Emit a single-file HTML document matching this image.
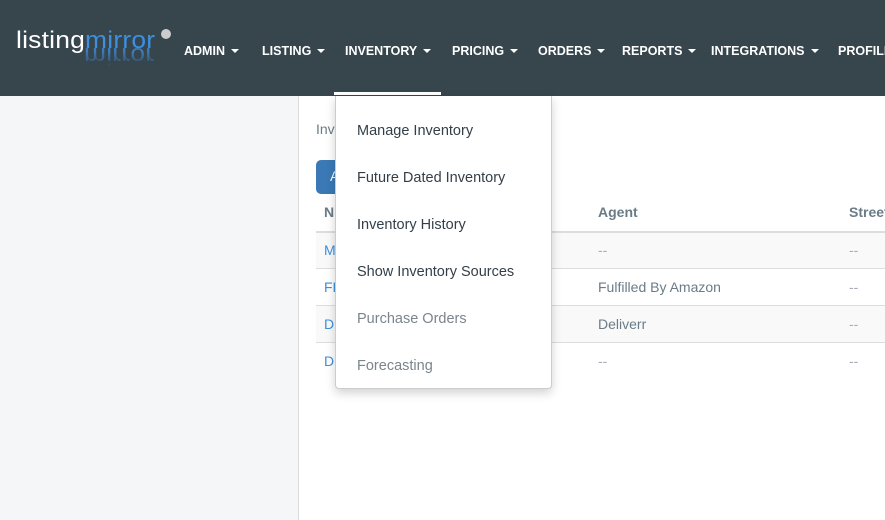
<!DOCTYPE html>
<html><head><meta charset="utf-8"><style>
*{margin:0;padding:0;box-sizing:border-box}
body{width:885px;height:520px;overflow:hidden;background:#fff;font-family:"Liberation Sans",sans-serif;position:relative}
.hdr{position:absolute;left:0;top:0;width:885px;height:96px;background:#37454d}
.logo{position:absolute;left:16px;top:29px;font-size:24px;letter-spacing:0.2px;color:#fff;transform:scaleX(1.1);transform-origin:left top;white-space:nowrap;line-height:24px}
.logo .m{color:#3d8fe0}
.refl{position:absolute;left:84px;top:43px;font-size:24px;line-height:24px;letter-spacing:0.2px;color:#3d8fe0;transform:scaleX(1.1) scaleY(-1);transform-origin:left center;opacity:.75;-webkit-mask-image:linear-gradient(to top,#000 35%,transparent 100%);white-space:nowrap}
.dot{position:absolute;left:161px;top:29px;width:10px;height:10px;border-radius:50%;background:#ccc}
.nav{position:absolute;top:44px;font-size:12.5px;font-weight:bold;color:#fff;white-space:nowrap}
.car{display:inline-block;width:0;height:0;border-left:4px solid transparent;border-right:4px solid transparent;border-top:4px solid #fff;vertical-align:middle;margin-left:6px;margin-top:-2px}
.ul{position:absolute;left:334px;top:92px;width:107px;height:3px;background:#fff}
.side{position:absolute;left:0;top:96px;width:299px;height:424px;background:#f5f6f7;border-right:1px solid #ddd}
.t{position:absolute;font-size:14px;color:#6a7c87}
.btn{position:absolute;left:316px;top:160px;width:40px;height:34px;background:#3a79b6;border-radius:5px}
.row{position:absolute;left:316px;width:569px;height:37px;border-top:1px solid #ddd}
.dd{position:absolute;left:335px;top:96px;width:217px;height:293px;background:#fff;border:1px solid #ccc;border-top:none;border-radius:0 0 4px 4px;box-shadow:0 4px 10px rgba(0,0,0,.18)}
.dd div{position:absolute;left:21px;font-size:14.5px;color:#333f48}
</style></head><body>
<div class="hdr"></div>
<div class="refl">mirror</div>
<div class="logo">listing<span class="m">mirror</span></div>
<div class="dot"></div>
<div class="nav" style="left:184px">ADMIN<span class="car"></span></div>
<div class="nav" style="left:262px">LISTING<span class="car"></span></div>
<div class="nav" style="left:345px">INVENTORY<span class="car"></span></div>
<div class="nav" style="left:452px">PRICING<span class="car"></span></div>
<div class="nav" style="left:538px">ORDERS<span class="car"></span></div>
<div class="nav" style="left:622px">REPORTS<span class="car"></span></div>
<div class="nav" style="left:711px">INTEGRATIONS<span class="car"></span></div>
<div class="nav" style="left:838px">PROFILE</div>
<div class="ul"></div>
<div class="side"></div>
<div class="t" style="left:316px;top:121px">Inventory</div>
<div class="btn"></div>
<div class="t" style="left:330px;top:168px;color:#fff">A</div>
<div class="row" style="top:231px;background:#f9f9f9;border-top:2px solid #ddd"></div>
<div class="row" style="top:268px"></div>
<div class="row" style="top:305px;background:#f9f9f9"></div>
<div class="row" style="top:342px"></div>
<div class="t" style="left:324px;top:204px;font-weight:bold">N</div>
<div class="t" style="left:598px;top:204px;font-weight:bold">Agent</div>
<div class="t" style="left:849px;top:204px;font-weight:bold">Street</div>
<div class="t" style="left:324px;top:242px;color:#3d8fe0">M</div>
<div class="t" style="left:324px;top:279px;color:#3d8fe0">FB</div>
<div class="t" style="left:324px;top:316px;color:#3d8fe0">D</div>
<div class="t" style="left:324px;top:353px;color:#3d8fe0">D</div>
<div class="t" style="left:598px;top:242px;color:#aab">--</div>
<div class="t" style="left:598px;top:279px">Fulfilled By Amazon</div>
<div class="t" style="left:598px;top:316px">Deliverr</div>
<div class="t" style="left:598px;top:353px;color:#aab">--</div>
<div class="t" style="left:849px;top:242px;color:#aab">--</div>
<div class="t" style="left:849px;top:279px;color:#aab">--</div>
<div class="t" style="left:849px;top:316px;color:#aab">--</div>
<div class="t" style="left:849px;top:353px;color:#aab">--</div>
<div class="dd">
<div style="top:27px">Manage Inventory</div>
<div style="top:74px">Future Dated Inventory</div>
<div style="top:121px">Inventory History</div>
<div style="top:168px">Show Inventory Sources</div>
<div style="top:215px;color:#7a858c">Purchase Orders</div>
<div style="top:262px;color:#7a858c">Forecasting</div>
</div>
</body></html>
